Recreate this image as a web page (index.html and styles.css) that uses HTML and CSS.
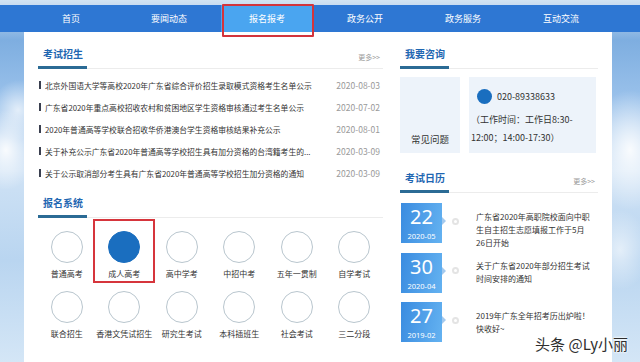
FILE: index.html
```html
<!DOCTYPE html>
<html lang="zh-CN">
<head>
    <meta charset="UTF-8">
    <meta name="viewport" content="width=device-width, initial-scale=1.0">
    <title>报名报考</title>
    <link rel="stylesheet" href="styles.css">
</head>
<body>
    <div class="page">
        <nav class="nav">
            <a class="nav-item">首页</a>
            <a class="nav-item">要闻动态</a>
            <a class="nav-item active">报名报考</a>
            <a class="nav-item">政务公开</a>
            <a class="nav-item">政务服务</a>
            <a class="nav-item">互动交流</a>
        </nav>

        <main class="panel">
            <section class="col-left">
                <div class="sec-head">
                    <h3 class="sec-title">考试招生</h3>
                    <span class="more">更多&gt;&gt;</span>
                </div>
                <ul class="news">
                    <li><span class="news-title">北京外国语大学等高校2020年广东省综合评价招生录取模式资格考生名单公示</span><span class="news-date">2020-08-03</span></li>
                    <li><span class="news-title">广东省2020年重点高校招收农村和贫困地区学生资格审核通过考生名单公示</span><span class="news-date">2020-07-02</span></li>
                    <li><span class="news-title">2020年普通高等学校联合招收华侨港澳台学生资格审核结果补充公示</span><span class="news-date">2020-08-01</span></li>
                    <li><span class="news-title">关于补充公示广东省2020年普通高等学校招生具有加分资格的台湾籍考生的...</span><span class="news-date">2020-03-09</span></li>
                    <li><span class="news-title">关于公示取消部分考生具有广东省2020年普通高等学校招生加分资格的通知</span><span class="news-date">2020-03-09</span></li>
                </ul>

                <div class="sec-head sec-head-sys">
                    <h3 class="sec-title">报名系统</h3>
                </div>
                <div class="systems">
                    <div class="sys"><span class="sys-icon"></span><span class="sys-name">普通高考</span></div>
                    <div class="sys selected"><span class="sys-icon filled"></span><span class="sys-name">成人高考</span></div>
                    <div class="sys"><span class="sys-icon"></span><span class="sys-name">高中学考</span></div>
                    <div class="sys"><span class="sys-icon"></span><span class="sys-name">中招中考</span></div>
                    <div class="sys"><span class="sys-icon"></span><span class="sys-name">五年一贯制</span></div>
                    <div class="sys"><span class="sys-icon"></span><span class="sys-name">自学考试</span></div>
                    <div class="sys"><span class="sys-icon"></span><span class="sys-name">联合招生</span></div>
                    <div class="sys"><span class="sys-icon"></span><span class="sys-name">香港文凭试招生</span></div>
                    <div class="sys"><span class="sys-icon"></span><span class="sys-name">研究生考试</span></div>
                    <div class="sys"><span class="sys-icon"></span><span class="sys-name">本科插班生</span></div>
                    <div class="sys"><span class="sys-icon"></span><span class="sys-name">社会考试</span></div>
                    <div class="sys"><span class="sys-icon"></span><span class="sys-name">三二分段</span></div>
                </div>
            </section>

            <aside class="col-right">
                <div class="sec-head">
                    <h3 class="sec-title">我要咨询</h3>
                </div>
                <div class="consult">
                    <div class="faq">常见问题</div>
                    <div class="phone">
                        <div class="phone-line"><span class="phone-dot"></span>020-89338633</div>
                        <div class="phone-hours">（工作时间：工作日8:30-<br>12:00；14:00-17:30）</div>
                    </div>
                </div>

                <div class="sec-head sec-head-cal">
                    <h3 class="sec-title">考试日历</h3>
                    <span class="more">更多&gt;&gt;</span>
                </div>
                <div class="cal">
                    <div class="cal-item">
                        <div class="cal-date"><div class="cal-day">22</div><div class="cal-month">2020-05</div></div>
                        <span class="cal-arrow"></span>
                        <span class="cal-dot"></span>
                        <div class="cal-text">广东省2020年高职院校面向中职<br>生自主招生志愿填报工作于5月<br>26日开始</div>
                    </div>
                    <div class="cal-item">
                        <div class="cal-date"><div class="cal-day">30</div><div class="cal-month">2020-04</div></div>
                        <span class="cal-arrow"></span>
                        <span class="cal-dot"></span>
                        <div class="cal-text">关于广东省2020年部分招生考试<br>时间安排的通知</div>
                    </div>
                    <div class="cal-item">
                        <div class="cal-date"><div class="cal-day">27</div><div class="cal-month">2019-02</div></div>
                        <span class="cal-arrow"></span>
                        <span class="cal-dot"></span>
                        <div class="cal-text">2019年广东全年招考历出炉啦！<br>快收好~</div>
                    </div>
                </div>
            </aside>
        </main>

        <div class="watermark">头条 @Ly小丽</div>
    </div>
</body>
</html>
```

FILE: styles.css
```css
body { margin: 0; font-family: "Noto Sans CJK SC", "Noto Sans", sans-serif; color: #333; }
.page { position: relative; width: 640px; height: 362px; overflow: hidden; padding-top: 5px; box-sizing: border-box;
  background:
    radial-gradient(ellipse 30px 40px at 6px 150px, rgba(255,255,255,0.9), rgba(255,255,255,0)),
    radial-gradient(ellipse 26px 30px at 18px 110px, rgba(255,255,255,0.7), rgba(255,255,255,0)),
    radial-gradient(ellipse 40px 60px at 630px 150px, rgba(255,255,255,0.9), rgba(255,255,255,0)),
    radial-gradient(ellipse 30px 40px at 620px 250px, rgba(255,255,255,0.6), rgba(255,255,255,0)),
    linear-gradient(180deg, #d3e4f3 0, #c9dcf0 5px, #7eaee0 40px, #98c0ea 95px, #cfe2f5 170px, #b9d5f0 260px, #d4e6f6 362px); }

.nav { display: flex; gap: 6px; height: 27px; padding-left: 25px; background: #2e77d3; }
.nav-item { position: relative; width: 92px; text-align: center; line-height: 27px; font-size: 9px; color: #fff; }
.nav-item.active { background: #4aa5f0; }
.nav-item.active::after { content: ""; position: absolute; top: -1px; bottom: -5px; left: 1px; right: -1px; border: 2px solid #d3343c; border-radius: 1px; }

.panel { display: flex; gap: 17px; margin-left: 24px; width: 588px; height: 330px; padding: 15px 14px 0; box-sizing: border-box; background: #fff; }
.col-left { width: 345px; }
.col-right { width: 198px; }

.sec-head { display: flex; justify-content: space-between; align-items: flex-end; padding-right: 3px; border-bottom: 1px solid #ececec; }
.sec-title { margin: 0 0 -1px; padding: 0 4px 5px 5px; font-size: 10px; line-height: 14px; font-weight: 700; color: #1f67b2; border-bottom: 3px solid #2b6b95; }
.more { padding-bottom: 6px; font-size: 7px; line-height: 10px; color: #9a9a9a; }

.news { list-style: none; margin: 5px 0 0; padding: 0 3px 0 1px; }
.news li { display: flex; justify-content: space-between; align-items: center; height: 22px; }
.news-title { display: flex; align-items: center; font-size: 7.8px; color: #333; white-space: nowrap; }
.news-title::before { content: ""; width: 2px; height: 8px; margin-right: 4px; background: #3a3f4f; }
.news-date { font-size: 8.5px; color: #999; }

.sec-head-sys { margin-top: 12px; }
.systems { display: grid; grid-template-columns: repeat(6, 1fr); margin-top: 5px; }
.sys { position: relative; display: flex; flex-direction: column; align-items: center; height: 60px; padding-top: 8px; box-sizing: border-box; }
.sys-icon { width: 32px; height: 32px; border: 1px solid #b9c6ce; border-radius: 50%; box-sizing: border-box; }
.sys-icon.filled { background: #1a6ebf; border-color: #1a6ebf; }
.sys-name { margin-top: 5px; font-size: 8px; line-height: 12px; color: #333; white-space: nowrap; }
.sys.selected::after { content: ""; position: absolute; top: -4px; bottom: 0; left: -3px; right: -2px; border: 2px solid #d6353c; }

.consult { display: flex; gap: 9px; height: 76px; margin-top: 8px; }
.faq { display: flex; align-items: flex-end; justify-content: center; width: 60px; padding-bottom: 7px; box-sizing: border-box; background: #edf3fa; font-size: 9.5px; line-height: 14px; }
.phone { width: 127px; padding: 12px 0 0 2px; box-sizing: border-box; background: #edf3fa; font-size: 9px; }
.phone-line { display: flex; align-items: center; gap: 5px; height: 15px; padding-left: 6px; }
.phone-dot { width: 15px; height: 15px; border-radius: 50%; background: #1a6ebf; }
.phone-hours { margin-top: 7px; line-height: 18px; white-space: nowrap; }

.sec-head-cal { margin-top: 18px; }
.cal { margin-top: 10px; }
.cal-item { display: flex; align-items: flex-start; height: 49.5px; }
.cal-date { flex-shrink: 0; width: 41px; height: 40px; margin-left: 1px; text-align: center; color: #fff; background: linear-gradient(100deg, #3a8ce0, #64b2f1); }
.cal-day { padding-top: 4px; font-family: "Noto Sans", sans-serif; font-size: 20px; line-height: 20px; }
.cal-month { margin-top: 4px; font-family: "Noto Sans", sans-serif; font-size: 7.5px; line-height: 10px; }
.cal-arrow { margin-top: 14px; border-left: 4px solid #a3c9ee; border-top: 4px solid transparent; border-bottom: 4px solid transparent; }
.cal-dot { width: 7px; height: 7px; margin: 14.5px 0 0 6px; border: 2px solid #e4e4e4; border-radius: 50%; box-sizing: border-box; }
.cal-text { margin: 6.5px 0 0 17px; font-size: 8px; line-height: 13px; color: #333; white-space: nowrap; }

.watermark { position: absolute; right: 12px; bottom: 8px; font-size: 15px; line-height: 20px; color: #2e2e2e;
  text-shadow: 0 0 2px #fff, 0 0 2px #fff, 0 0 3px #fff; }
```
